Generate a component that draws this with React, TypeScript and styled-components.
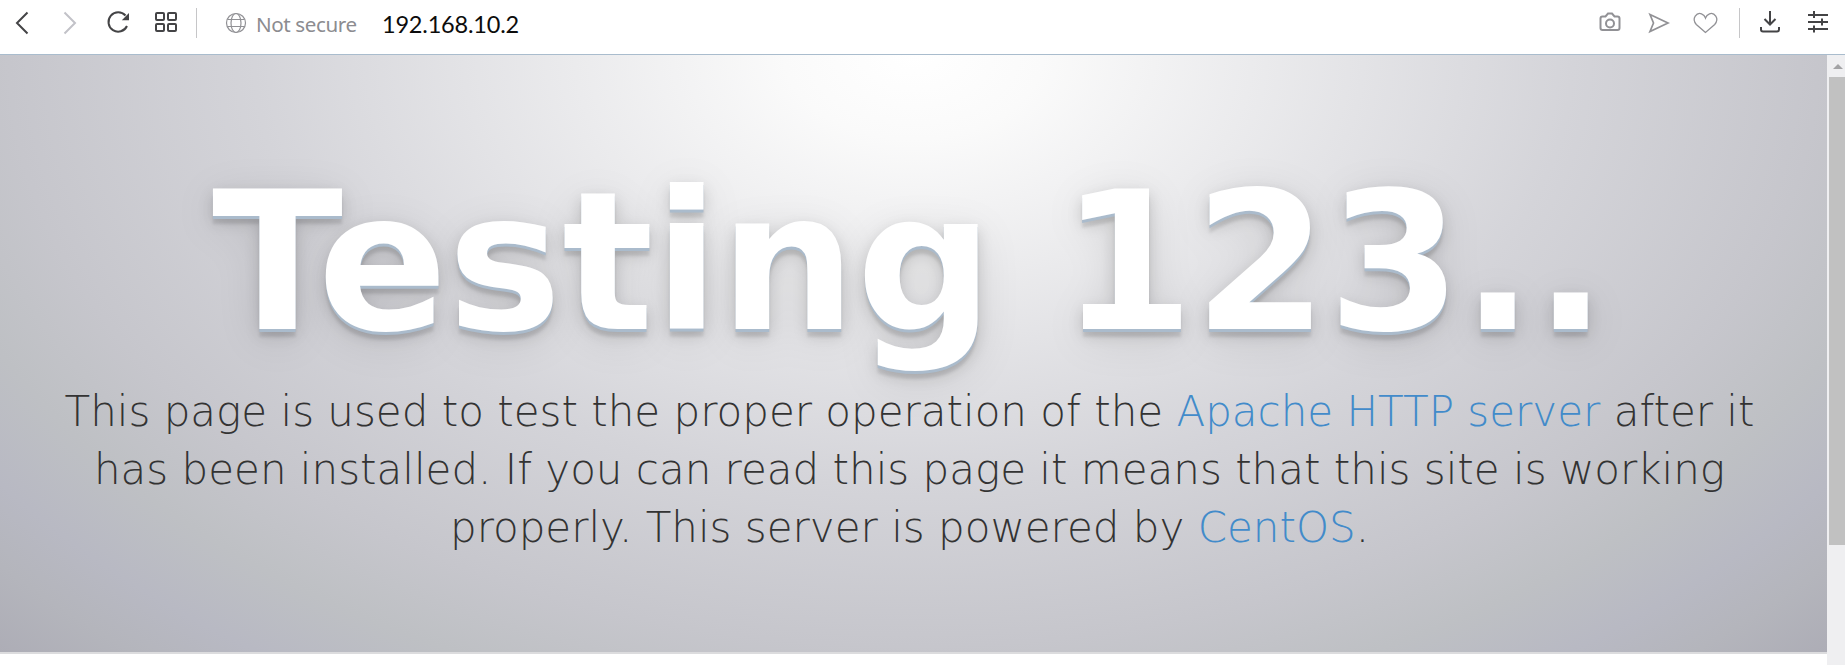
import React from 'react';
import styled, { createGlobalStyle } from 'styled-components';

const GlobalStyle = createGlobalStyle`
  body { margin: 0; background: #fff; overflow: hidden; }
  * { box-sizing: border-box; }
`;

const Window = styled.div`
  display: flex;
  flex-direction: column;
  width: 1845px;
  height: 665px;
  overflow: hidden;
`;

const Toolbar = styled.header`
  display: flex;
  justify-content: space-between;
  height: 55px;
  padding: 8px 15px 0 11px;
  border-bottom: 1px solid #a9bccd;
  background: #fff;
  flex: none;
`;

const Group = styled.div`
  display: flex;
  align-items: center;
  height: 30px;
`;

const Icon = styled.svg<{ $gap?: number; $tone?: string; $weight?: number }>`
  display: block;
  width: 24px;
  height: 24px;
  margin-right: ${p => p.$gap ?? 24}px;
  fill: none;
  stroke: ${p => p.$tone ?? '#444446'};
  stroke-width: ${p => p.$weight ?? 2};
  overflow: visible;
`;

const Divider = styled.span<{ $gap: number }>`
  width: 1px;
  height: 30px;
  margin-right: ${p => p.$gap}px;
  background: #c6c6c8;
`;

const Security = styled.span`
  width: 126px;
  padding-top: 2px;
  font: 20.6px/30px 'Noto Sans', sans-serif;
  letter-spacing: -0.4px;
  color: #8c8c90;
  white-space: nowrap;
`;

const Address = styled.span`
  padding-top: 1px;
  font: 23.500px/30px Lato, sans-serif;
  letter-spacing: -0.2px;
  color: #0c0c0c;
`;

const Viewport = styled.div`
  display: flex;
  flex: 1;
  min-height: 0;
`;

const Page = styled.main`
  width: 1827px;
  background: #fff;
`;

const Jumbotron = styled.section`
  height: 599px;
  padding: 88px 53px 0 45px;
  border-bottom: 2px solid #dcdcde;
  text-align: center;
  background: radial-gradient(ellipse farthest-corner at 50% 0, #fff 0%, #fafafa 10%, #d4d4d9 51%, #c6c6cc 70%, #bec0c4 79%, #b8b9c3 87%, #b4b5bc 93%, #adadb6 100%);
  font-family: 'DejaVu Sans', sans-serif;
`;

const Title = styled.h1`
  margin: 0;
  font-size: 192px;
  line-height: 240px;
  font-weight: 700;
  white-space: nowrap;
  color: #fff;
  text-shadow: 0 3px 0 #abc, 0 6px 15px rgba(0, 0, 0, 0.15), 0 7.5px 3px rgba(0, 0, 0, 0.1), 0 9px 45px rgba(0, 0, 0, 0.1);
`;

const Lead = styled.p`
  margin: 0;
  font-size: 42px;
  line-height: 58px;
  font-weight: 200;
  color: #333;
`;

const Line = styled.span`
  display: block;
  white-space: nowrap;
`;

const Link = styled.a`
  color: #428bca;
  text-decoration: none;
`;

const Scrollbar = styled.aside`
  display: flex;
  flex-direction: column;
  width: 18px;
  padding-left: 2px;
  background: #efeff1;
`;

const ArrowBox = styled.div`
  display: flex;
  align-items: center;
  justify-content: flex-end;
  height: 22px;
  padding-right: 2px;
`;

const Arrow = styled.svg`
  width: 10px;
  height: 5px;
  fill: #a3a3a5;
`;

const Thumb = styled.div`
  height: 468px;
  background: #c1c1c1;
`;

const MUTED = '#919195';

export default function App() {
  return (
    <Window>
      <GlobalStyle />
      <Toolbar>
        <Group>
          <Icon viewBox="0 0 24 24"><path d="M16.500 1.500 6 12l10.500 10.500" /></Icon>
          <Icon viewBox="0 0 24 24" $tone="#c2c2c8"><path d="M5.500 1.500 16 12l-10.500 10.500" /></Icon>
          <Icon viewBox="0 0 24 24"><path d="M18.500 4.500A9.700 9.700 0 1 0 20 15" /><path d="M22 2v7.200h-7.200z" fill="#444446" stroke="none" /></Icon>
          <Icon viewBox="0 0 24 24" $gap={17}>
            <rect x="1" y="2" width="8" height="7" rx="1" /><rect x="13" y="2" width="8" height="7" rx="1" />
            <rect x="1" y="13" width="8" height="7" rx="1" /><rect x="13" y="13" width="8" height="7" rx="1" />
          </Icon>
          <Divider $gap={28} />
          <Icon viewBox="0 0 24 24" $tone={MUTED} $gap={7} $weight={1.2}>
            <circle cx="11" cy="12" r="9.500" /><ellipse cx="11" cy="12" rx="5" ry="9.500" /><path d="M2.500 8.500h17M2.500 15.500h17" />
          </Icon>
          <Security>Not secure</Security>
          <Address>192.168.10.2</Address>
        </Group>
        <Group>
          <Icon viewBox="0 0 24 24" $tone={MUTED} $gap={25}><path d="M4.500 5.500h3L10 2.500h4l2.500 3h3q2 0 2 2v9.500q0 2-2 2h-15q-2 0-2-2V7.500q0-2 2-2z" /><circle cx="12" cy="12.500" r="4" /></Icon>
          <Icon viewBox="0 0 24 24" $tone={MUTED} $gap={22} $weight={1.7}><path d="M3 3.500 21 12 3 20.500 6.500 12z" /></Icon>
          <Icon viewBox="0 0 24 24" $tone={MUTED} $gap={22} $weight={1.3}><path d="M12.500 21.500 3.300 13.500C-2 7.500 4 1 8.500 2.800Q11.500 4 12.500 7Q13.500 4 16.500 2.800C21 1 27 7.500 21.700 13.500z" /></Icon>
          <Divider $gap={18} />
          <Icon viewBox="0 0 24 24"><path d="M12 0v13M6.500 8l5.500 5.500L17.500 8M3 16v2.500q0 2 2 2h14q2 0 2-2V16" /></Icon>
          <Icon viewBox="0 0 24 24" $gap={0}><path d="M2 4h20M2 11h20M2 18h20M8 0v7M16 7.500v7M8 14.500v7" /></Icon>
        </Group>
      </Toolbar>
      <Viewport>
        <Page>
          <Jumbotron>
            <Title>Testing 123..</Title>
            <Lead>
              <Line>This page is used to test the proper operation of the <Link>Apache HTTP server</Link> after it</Line>
              <Line>has been installed. If you can read this page it means that this site is working</Line>
              <Line>properly. This server is powered by <Link>CentOS</Link>.</Line>
            </Lead>
          </Jumbotron>
        </Page>
        <Scrollbar>
          <ArrowBox><Arrow viewBox="0 0 10 5"><path d="M0 5 5 0l5 5z" /></Arrow></ArrowBox>
          <Thumb />
        </Scrollbar>
      </Viewport>
    </Window>
  );
}
